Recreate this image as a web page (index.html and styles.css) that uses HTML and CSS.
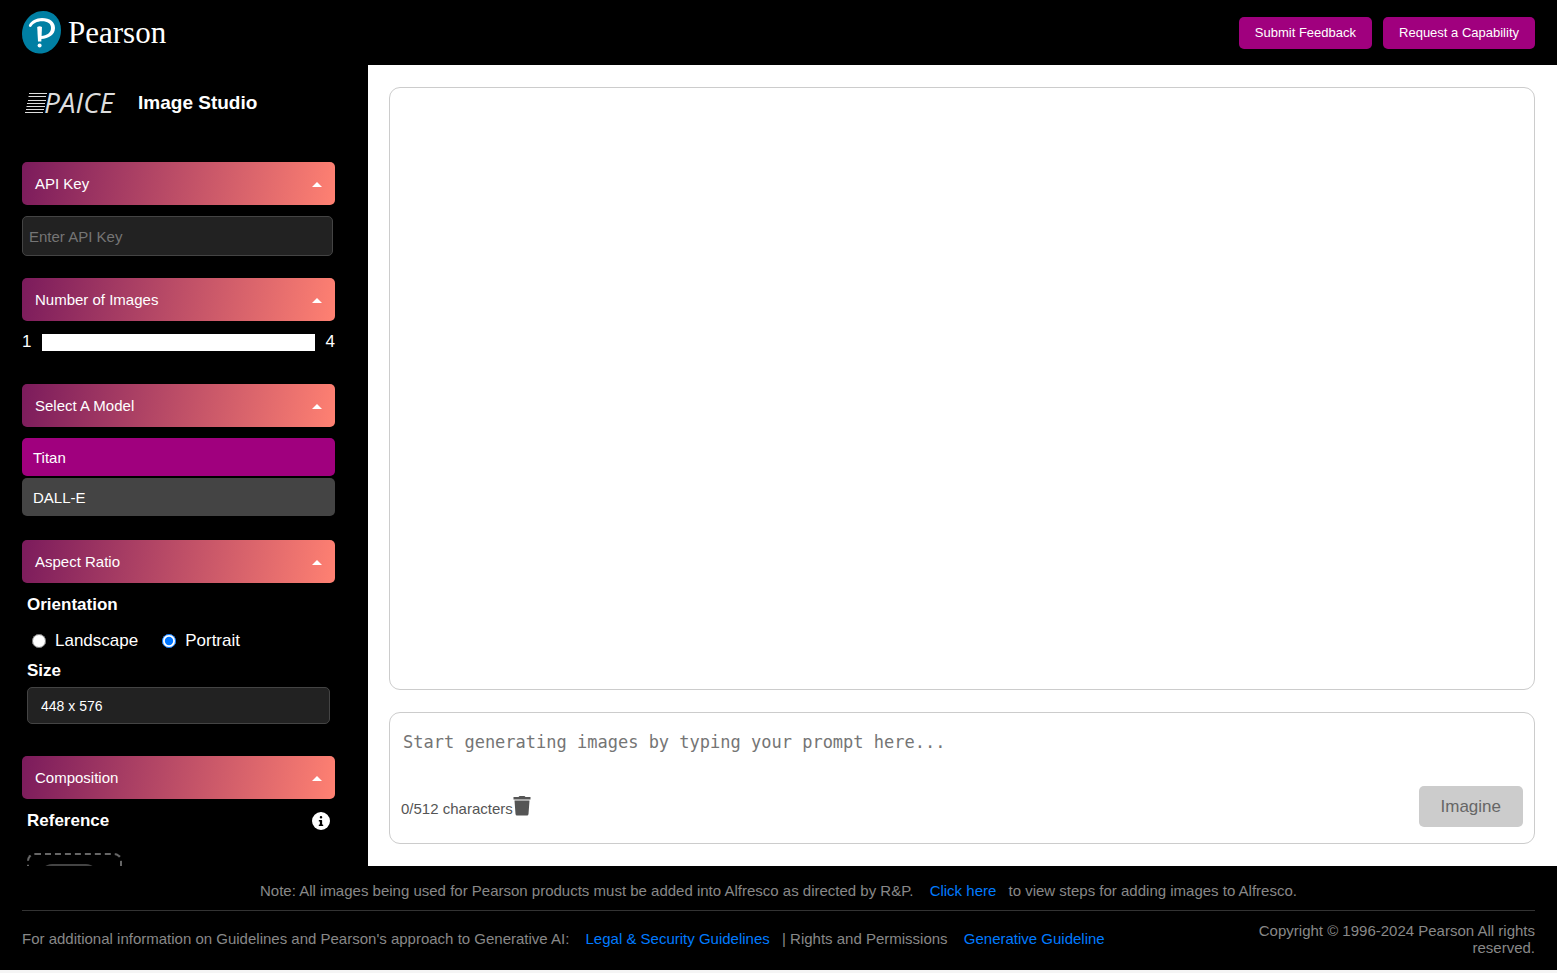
FILE: index.html
```html
<!DOCTYPE html>
<html lang="en">
<head>
    <meta charset="UTF-8">
    <meta name="viewport" content="width=device-width, initial-scale=1.0">
    <title>PAICE Image Studio</title>
    <link rel="stylesheet" href="styles.css">
</head>
<body>
    <header class="header">
        <div class="logo">
            <svg class="logo-mark" viewBox="0 0 40 44">
                <path d="M21 0 C32 0 39 8 39 19 C39 32 29 43 17 42.500 C7 42 0 34 0 23 C0 11 9 0 21 0 Z" fill="#007fa3"/>
                <path d="M7 14 C9 10 14 7 20 7 C28 7 33 11 33 17 C33 23.500 27 27.500 19 28 L19 25 C25 24.500 29 22 29 17 C29 12.500 25.500 10.300 20 10.300 C15 10.300 11 12.500 9.500 15.300 C8.500 16.800 6.300 15.600 7 14 Z" fill="#fff"/>
                <path d="M15.200 16 Q17.500 14.500 20 16 L19.300 30.500 H16 Z" fill="#fff"/>
                <circle cx="17.600" cy="34.500" r="2" fill="#fff"/>
            </svg>
            <span class="logo-text">Pearson</span>
        </div>
        <div class="header-buttons">
            <button type="button" class="header-btn">Submit Feedback</button>
            <button type="button" class="header-btn">Request a Capability</button>
        </div>
    </header>

    <div class="container">
        <aside class="sidebar">
            <div class="title-row">
                <div class="paice">
                    <svg class="paice-lines" viewBox="0 0 23 22">
                        <path d="M4 1.500 H22 M3.500 4.500 H21 M3 8.500 H21 M2 11.500 H20 M1.500 14.500 H20 M1 17.500 H19 M0 20.500 H18" stroke="#ddd" stroke-width="1"/>
                    </svg>
                    <span class="paice-text">PAICE</span>
                </div>
                <h1 class="title">Image Studio</h1>
            </div>

            <section class="section">
                <button type="button" class="section-head">API Key <span class="arrow"></span></button>
                <input type="text" id="api-key" class="api-key" placeholder="Enter API Key" aria-label="API Key">
            </section>

            <section class="section images-section">
                <button type="button" class="section-head">Number of Images <span class="arrow"></span></button>
                <div class="slider-row">
                    <span>1</span>
                    <input type="range" id="num-images" class="slider" min="1" max="4" value="1" aria-label="Number of Images">
                    <span>4</span>
                </div>
            </section>

            <section class="section model-section">
                <button type="button" class="section-head">Select A Model <span class="arrow"></span></button>
                <div class="models">
                    <button type="button" class="model active">Titan</button>
                    <button type="button" class="model">DALL-E</button>
                </div>
            </section>

            <section class="section aspect-section">
                <button type="button" class="section-head">Aspect Ratio <span class="arrow"></span></button>
                <div class="section-body">
                    <h2 class="sub-title">Orientation</h2>
                    <div class="radio-group">
                        <input type="radio" id="landscape" name="orientation" value="landscape">
                        <label for="landscape">Landscape</label>
                        <input type="radio" id="portrait" name="orientation" value="portrait" checked>
                        <label for="portrait">Portrait</label>
                    </div>
                    <label class="sub-title" for="size">Size</label>
                    <select id="size" class="size">
                        <option value="448x576">448 x 576</option>
                    </select>
                </div>
            </section>

            <section class="section">
                <button type="button" class="section-head">Composition <span class="arrow"></span></button>
                <div class="section-body">
                    <div class="reference-row">
                        <h2 class="sub-title">Reference</h2>
                        <svg class="info-icon" viewBox="0 0 512 512">
                            <path fill="#fff" d="M256 512A256 256 0 1 0 256 0a256 256 0 1 0 0 512zM208 352H224V272H208c-9 0-16-7-16-16V240c0-9 7-16 16-16H272c9 0 16 7 16 16V352H304c9 0 16 7 16 16V384c0 9-7 16-16 16H208c-9 0-16-7-16-16V368c0-9 7-16 16-16zM256 112a36 36 0 1 1 0 72 36 36 0 1 1 0-72z"/>
                        </svg>
                    </div>
                    <div class="upload">
                        <div class="upload-inner"></div>
                    </div>
                </div>
            </section>
        </aside>

        <main class="main">
            <div class="gallery"></div>
            <div class="prompt-box">
                <textarea id="prompt" class="prompt" aria-label="Prompt" placeholder="Start generating images by typing your prompt here..."></textarea>
                <div class="prompt-footer">
                    <div class="counter">
                        <span>0/512 characters</span>
                        <button type="button" class="clear-btn" aria-label="Clear prompt">
                            <svg class="trash" viewBox="0 0 18 20">
                                <path d="M1 1 H5.500 L6.500 0 H11.500 L12.500 1 H17.500 V3.500 H0.500 V1 Z M1.500 4.500 H16.500 L15.500 18 Q15.300 19.500 14 19.500 H4 Q2.700 19.500 2.500 18 Z" fill="#555"/>
                            </svg>
                        </button>
                    </div>
                    <button type="button" class="imagine-btn" disabled>Imagine</button>
                </div>
            </div>
        </main>
    </div>

    <footer class="footer">
        <p class="note">Note: All images being used for Pearson products must be added into Alfresco as directed by R&amp;P. <a href="#">Click here</a> to view steps for adding images to Alfresco.</p>
        <div class="footer-bottom">
            <p>For additional information on Guidelines and Pearson's approach to Generative AI: <a href="#">Legal &amp; Security Guidelines</a> | Rights and Permissions <a href="#">Generative Guideline</a></p>
            <p class="copyright">Copyright © 1996-2024 Pearson All rights reserved.</p>
        </div>
    </footer>
</body>
</html>
```
FILE: styles.css
```css
* {
    margin: 0;
    padding: 0;
    box-sizing: border-box;
}

body {
    height: 100vh;
    padding-bottom: 3px;
    display: flex;
    flex-direction: column;
    font-family: "Liberation Sans", Arial, sans-serif;
    font-size: 15px;
    background-color: #f5f5f5;
}

button, input, select {
    font-family: inherit;
    font-size: 15px;
}

/* header */
.header {
    display: flex;
    justify-content: space-between;
    align-items: center;
    height: 65px;
    padding: 0 22px;
    background: #000;
}

.logo {
    display: flex;
    align-items: center;
    gap: 6px;
}

.logo-mark {
    width: 40px;
    height: 44px;
}

.logo-text {
    font-family: "Liberation Serif", serif;
    font-size: 31px;
    color: #fff;
}

.header-buttons {
    display: flex;
    gap: 11px;
}

.header-btn {
    height: 32px;
    padding: 0 16px;
    border: none;
    border-radius: 5px;
    background: #a0007e;
    color: #fff;
    font-size: 13px;
}

.container {
    flex: 1;
    min-height: 0;
    display: flex;
}

/* sidebar */
.sidebar {
    width: 368px;
    flex-shrink: 0;
    padding: 22px 33px 0 22px;
    background: #000;
    color: #fff;
    overflow: auto;
    scrollbar-width: none;
}

.title-row {
    display: flex;
    align-items: center;
    gap: 24px;
    height: 32px;
    margin-bottom: 43px;
    padding-left: 3px;
}

.paice {
    display: flex;
    align-items: center;
}

.paice-lines {
    width: 23px;
    height: 22px;
    margin-right: -4px;
}

.paice-text {
    font-family: "Open Sans", sans-serif;
    font-size: 28px;
    line-height: 28px;
    padding-bottom: 2px;
    font-style: italic;
    color: #ddd;
}

.title {
    font-size: 19px;
}

.section {
    margin-bottom: 22px;
}

.section-head {
    display: flex;
    justify-content: space-between;
    align-items: center;
    width: 100%;
    height: 43px;
    padding: 0 13px;
    border: none;
    border-radius: 5px;
    background: linear-gradient(100deg, #7b1b5c, #ff8172);
    color: #fff;
}

.arrow {
    margin-top: 2px;
    border-left: 5px solid transparent;
    border-right: 5px solid transparent;
    border-bottom: 5px solid #fff;
}

.api-key {
    width: calc(100% - 2px);
    height: 40px;
    margin-top: 11px;
    padding: 0 6px;
    border: 1px solid #444;
    border-radius: 5px;
    background: #222;
    color: #fff;
}

.images-section {
    margin-bottom: 32px;
}

.slider-row {
    display: flex;
    align-items: center;
    gap: 11px;
    height: 20px;
    margin-top: 11px;
    font-size: 17px;
}

.slider {
    flex: 1;
    min-width: 0;
    height: 17px;
    appearance: none;
    background: #fff;
}

.slider::-webkit-slider-thumb {
    appearance: none;
    width: 17px;
    height: 17px;
    background: #fff;
}

.model-section {
    margin-bottom: 24px;
}

.models {
    display: flex;
    flex-direction: column;
    gap: 2px;
    margin-top: 11px;
}

.model {
    height: 38px;
    padding: 0 11px;
    border: none;
    border-radius: 5px;
    background: #444;
    color: #fff;
    text-align: left;
}

.model.active {
    background: #a0007e;
}

.aspect-section {
    margin-bottom: 32px;
}

.section-body {
    padding: 12px 5px 0;
}

.sub-title {
    display: block;
    font-size: 17px;
    line-height: 20px;
    font-weight: bold;
}

.radio-group {
    display: flex;
    align-items: center;
    height: 46px;
    padding: 5px 0 0 5px;
    font-size: 17px;
}

.radio-group input {
    width: 14px;
    height: 14px;
    margin-right: 9px;
}

.radio-group label {
    margin-right: 24px;
}

.size {
    display: block;
    width: 100%;
    height: 37px;
    margin-top: 6px;
    padding: 0 13px;
    border: 1px solid #444;
    border-radius: 5px;
    background: #222;
    color: #fff;
    font-size: 14px;
    appearance: none;
}

.reference-row {
    display: flex;
    justify-content: space-between;
    align-items: center;
}

.info-icon {
    width: 18px;
    height: 18px;
}

.upload {
    width: 95px;
    height: 95px;
    margin-top: 22px;
    padding: 9px 11px;
    border: 2px dashed #666;
    border-radius: 8px;
}

.upload-inner {
    width: 58px;
    height: 58px;
    border-radius: 12px;
    background: #444;
}

/* main */
.main {
    flex: 1;
    min-width: 0;
    display: flex;
    flex-direction: column;
    gap: 22px;
    padding: 22px 22px 22px 21px;
    background: #fff;
}

.gallery {
    flex: 1;
    border: 1px solid #ccc;
    border-radius: 11px;
}

.prompt-box {
    height: 132px;
    display: flex;
    flex-direction: column;
    justify-content: space-between;
    padding: 11px 11px 16px;
    border: 1px solid #ccc;
    border-radius: 11px;
}

.prompt {
    height: 54px;
    padding: 8px 2px;
    border: none;
    outline: none;
    resize: none;
    background: none;
    font-family: "DejaVu Sans Mono", monospace;
    font-size: 17px;
}

.prompt-footer {
    display: flex;
    justify-content: space-between;
    align-items: center;
}

.counter {
    display: flex;
    align-items: flex-end;
    color: #555;
}

.clear-btn {
    padding-bottom: 1px;
    border: none;
    background: none;
}

.trash {
    display: block;
    width: 18px;
    height: 20px;
}

.imagine-btn {
    height: 41px;
    padding: 0 22px;
    border: none;
    border-radius: 5px;
    background: #ccc;
    color: #666;
    font-size: 17px;
}

/* footer */
.footer {
    padding: 0 22px;
    background: #000;
    color: #888;
}

.footer a {
    margin: 0 8px 0 12px;
    color: #007bff;
    text-decoration: none;
}

.note {
    padding: 16px 0 11px;
    border-bottom: 1px solid #333;
    line-height: 17px;
    text-align: center;
}

.footer-bottom {
    display: flex;
    justify-content: space-between;
    align-items: center;
    height: 59px;
    padding-bottom: 4px;
    line-height: 17px;
}

.copyright {
    width: 300px;
    text-align: right;
}
```
